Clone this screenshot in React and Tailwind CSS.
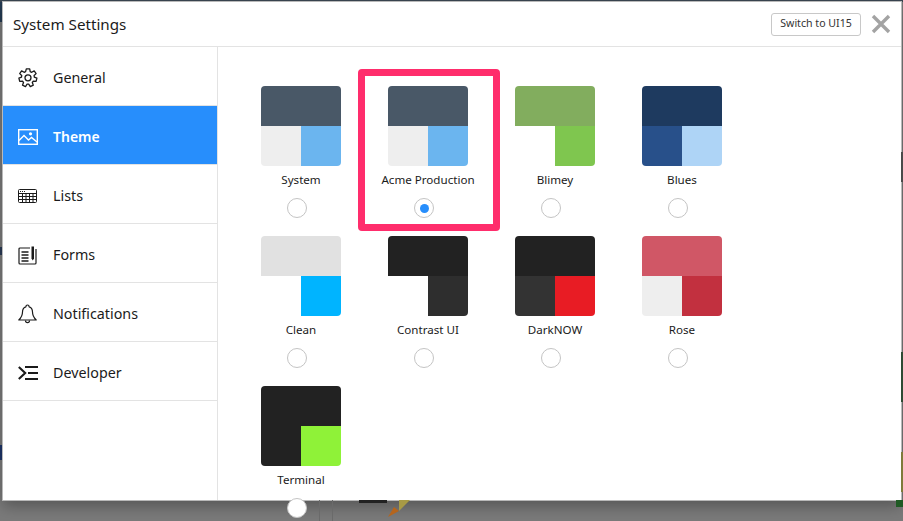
const font = { fontFamily: '"Noto Sans", sans-serif' };

function GearIcon() {
  return (
    <svg width="20" height="20" viewBox="0 0 20 20" fill="none" stroke="currentColor" strokeWidth="1.3" strokeLinejoin="round">
      <path d="M8.3 0.8h3.4l.5 2.8 1.5.7 2.5-1.4 1.9 2.7-2 1.9.2 1.6 2.6 1-.8 3.2-2.8-.1-1 1.3 1 2.7-3 1.4-1.6-2.4h-1.6l-1.6 2.4-3-1.4 1-2.7-1-1.3-2.8.1-.8-3.2 2.6-1 .2-1.6-2-1.9 1.9-2.7 2.5 1.4 1.5-.7z" />
      <circle cx="10" cy="9.8" r="3" />
    </svg>
  );
}

function ImageIcon() {
  return (
    <svg width="20" height="16" viewBox="0 0 20 16" fill="none" stroke="currentColor" strokeWidth="1.4">
      <rect x="0.7" y="0.7" width="18.6" height="14.6" />
      <path d="M1 11.5l5-5 4.5 4.5 3-2.5 5.5 4.5" />
      <circle cx="12.5" cy="4.8" r="1.6" fill="currentColor" stroke="none" />
    </svg>
  );
}

function ListIcon() {
  return (
    <svg width="19" height="14" viewBox="0 0 19 14" fill="none" stroke="currentColor" strokeWidth="1">
      <rect x="0.5" y="0.5" width="18" height="13" rx="1" />
      <path d="M1 4.5h17M1 7.5h17M1 10.5h17M4.5 4.5v9M8 4.5v9M11.5 4.5v9M15 4.5v9" />
      <path d="M2 2.5h1M4 2.5h1M6 2.5h1" />
    </svg>
  );
}

function FormIcon() {
  return (
    <svg width="19" height="20" viewBox="0 0 19 20" fill="none" stroke="currentColor" strokeWidth="1.2">
      <path d="M12 3H2a1 1 0 0 0-1 1v14a1 1 0 0 0 1 1h15a1 1 0 0 0 1-1V4" />
      <path d="M3.5 7h7M3.5 10h7M3.5 13h7M3.5 16h7" strokeWidth="1.4" />
      <path d="M13.5 1.5h2.5v12l-1.25 2-1.25-2z" fill="currentColor" stroke="none" />
    </svg>
  );
}

function BellIcon() {
  return (
    <svg width="19" height="20" viewBox="0 0 19 20" fill="none" stroke="currentColor" strokeWidth="1.2" strokeLinejoin="round">
      <path d="M9.5 1c1.2 0 1.6.9 1.6 1.8 2.4.7 3.4 2.6 3.4 5.2 0 3.3 1 5.4 3.7 8H.8c2.7-2.6 3.7-4.7 3.7-8 0-2.6 1-4.5 3.4-5.2C7.9 1.9 8.3 1 9.5 1z" />
      <path d="M7.5 16.5c0 1.4.9 2.2 2 2.2s2-.8 2-2.2" />
    </svg>
  );
}

function DevIcon() {
  return (
    <svg width="20" height="14" viewBox="0 0 20 14" fill="none" stroke="currentColor" strokeWidth="2.1">
      <path d="M.8 1l6.4 6-6.4 6" />
      <path d="M7 1h13M10 7h10M7 13h13" />
    </svg>
  );
}

function Pencil() {
  return (
    <svg width="24" height="21" viewBox="0 0 24 21">
      <path d="M12 0h11L12 11z" fill="#a89a45" />
      <path d="M7 7l5 4-11 6z" fill="#b5651d" />
    </svg>
  );
}

const navItems = [
  { label: "General", icon: <GearIcon /> },
  { label: "Theme", icon: <ImageIcon />, active: true },
  { label: "Lists", icon: <ListIcon /> },
  { label: "Forms", icon: <FormIcon /> },
  { label: "Notifications", icon: <BellIcon /> },
  { label: "Developer", icon: <DevIcon /> },
];

const themes = [
  { name: "System", top: "bg-[#495867]", left: "bg-[#eeeeee]", right: "bg-[#6bb5ef]" },
  { name: "Acme Production", top: "bg-[#495867]", left: "bg-[#eeeeee]", right: "bg-[#6bb5ef]", selected: true },
  { name: "Blimey", top: "bg-[#82ad5e]", left: "bg-white", right: "bg-[#7fc64f]" },
  { name: "Blues", top: "bg-[#1e3a5f]", left: "bg-[#28508a]", right: "bg-[#aed4f6]" },
  { name: "Clean", top: "bg-[#e1e1e1]", left: "bg-white", right: "bg-[#00b4ff]" },
  { name: "Contrast UI", top: "bg-[#222222]", left: "bg-white", right: "bg-[#2e2e2e]" },
  { name: "DarkNOW", top: "bg-[#222222]", left: "bg-[#333333]", right: "bg-[#e81c24]" },
  { name: "Rose", top: "bg-[#d05766]", left: "bg-[#eeeeee]", right: "bg-[#c2303f]" },
  { name: "Terminal", top: "bg-[#222222]", left: "bg-[#222222]", right: "bg-[#8ff238]" },
];

function ThemeCard({ theme }) {
  return (
    <div className="relative h-[150px] w-[127px] pl-[23px]">
      <div className="flex w-20 flex-col items-center">
        <div className="h-20 w-20 overflow-hidden rounded">
          <div className={`h-10 ${theme.top}`} />
          <div className="flex h-10">
            <div className={`w-10 ${theme.left}`} />
            <div className={`w-10 ${theme.right}`} />
          </div>
        </div>
        <div className="mt-[5px] whitespace-nowrap text-[11.6px] leading-[18px] text-[#1b1b1b]">{theme.name}</div>
        <div className="ml-[26px] mt-[9px] flex h-5 w-5 items-center justify-center self-start rounded-full border border-[#c4c4c4] bg-white">
          {theme.selected && <div className="h-[9px] w-[9px] rounded-full bg-[#278efc]" />}
        </div>
      </div>
      {theme.selected && (
        <div className="absolute left-[-7px] top-[-17px] h-[162px] w-[142px] rounded-[4px] border-[7px] border-[#ff2d6c]" />
      )}
    </div>
  );
}

export default function App() {
  return (
    <div style={font} className="h-[521px] w-[903px] overflow-hidden bg-[#7a7a7a]">
      <div className="h-[2px] bg-[#3a4652]" />
      <div className="flex h-[498px]">
        <div className="flex w-[3px] shrink-0 flex-col">
          <div className="h-[20px] bg-[#243a52]" />
          <div className="h-[225px]" />
          <div className="h-[8px] bg-[#2a3a55]" />
          <div className="h-[190px]" />
          <div className="h-[15px] bg-[#1d3468]" />
        </div>
        <div className="flex h-[498px] w-[898px] flex-col bg-white shadow-[0_0_0_1px_#b9b9b9,0_6px_14px_rgba(0,0,0,0.3)]">
          <div className="flex h-[45px] shrink-0 items-center justify-between border-b border-[#e3e3e3] pl-[10px] pr-[10px]">
            <div className="text-[15.2px] text-[#1b1b1b]">System Settings</div>
            <div className="flex items-center gap-[10px]">
              <button className="h-[23px] w-[90px] rounded-[3px] border border-[#c8c8c8] text-[10.6px] text-[#333333]">Switch to UI15</button>
              <svg width="20" height="20" viewBox="0 0 20 20" stroke="#a3a3a3" strokeWidth="3.4">
                <path d="M2 2l16 16M18 2L2 18" />
              </svg>
            </div>
          </div>
          <div className="flex min-h-0 flex-1">
            <div className="w-[215px] shrink-0 border-r border-[#e3e3e3]">
              {navItems.map((item) => (
                <div
                  key={item.label}
                  className={`flex h-[59px] items-center border-b border-[#e3e3e3] pl-[15px] pt-[3px] ${item.active ? "bg-[#278efc] text-[14px] font-semibold text-white" : "text-[14.3px] text-[#1b1b1b]"}`}
                >
                  <div className="flex w-[35px] shrink-0 items-center">{item.icon}</div>
                  {item.label}
                </div>
              ))}
            </div>
            <div className="grid flex-1 grid-cols-[repeat(4,127px)] content-start pl-[20px] pt-[39px]">
              {themes.map((theme) => (
                <ThemeCard key={theme.name} theme={theme} />
              ))}
            </div>
          </div>
        </div>
        <div className="flex w-[2px] shrink-0 flex-col">
          <div className="h-[150px]" />
          <div className="h-[30px] bg-[#4a4a4a]" />
          <div className="h-[170px]" />
          <div className="h-[50px] bg-[#2f4a34]" />
          <div className="h-[50px]" />
          <div className="h-[40px] bg-[#7f7a3a]" />
        </div>
      </div>
      <div className="flex h-[21px] pl-[319px]">
        <div className="h-full w-[14px] border-x border-[#6a6a6a]" />
        <div className="ml-[26px] h-[3px] w-[28px] bg-[#222222]" />
        <Pencil />
        <div className="ml-auto h-[7px] w-[7px] bg-[#1f5a24]" />
      </div>
    </div>
  );
}
